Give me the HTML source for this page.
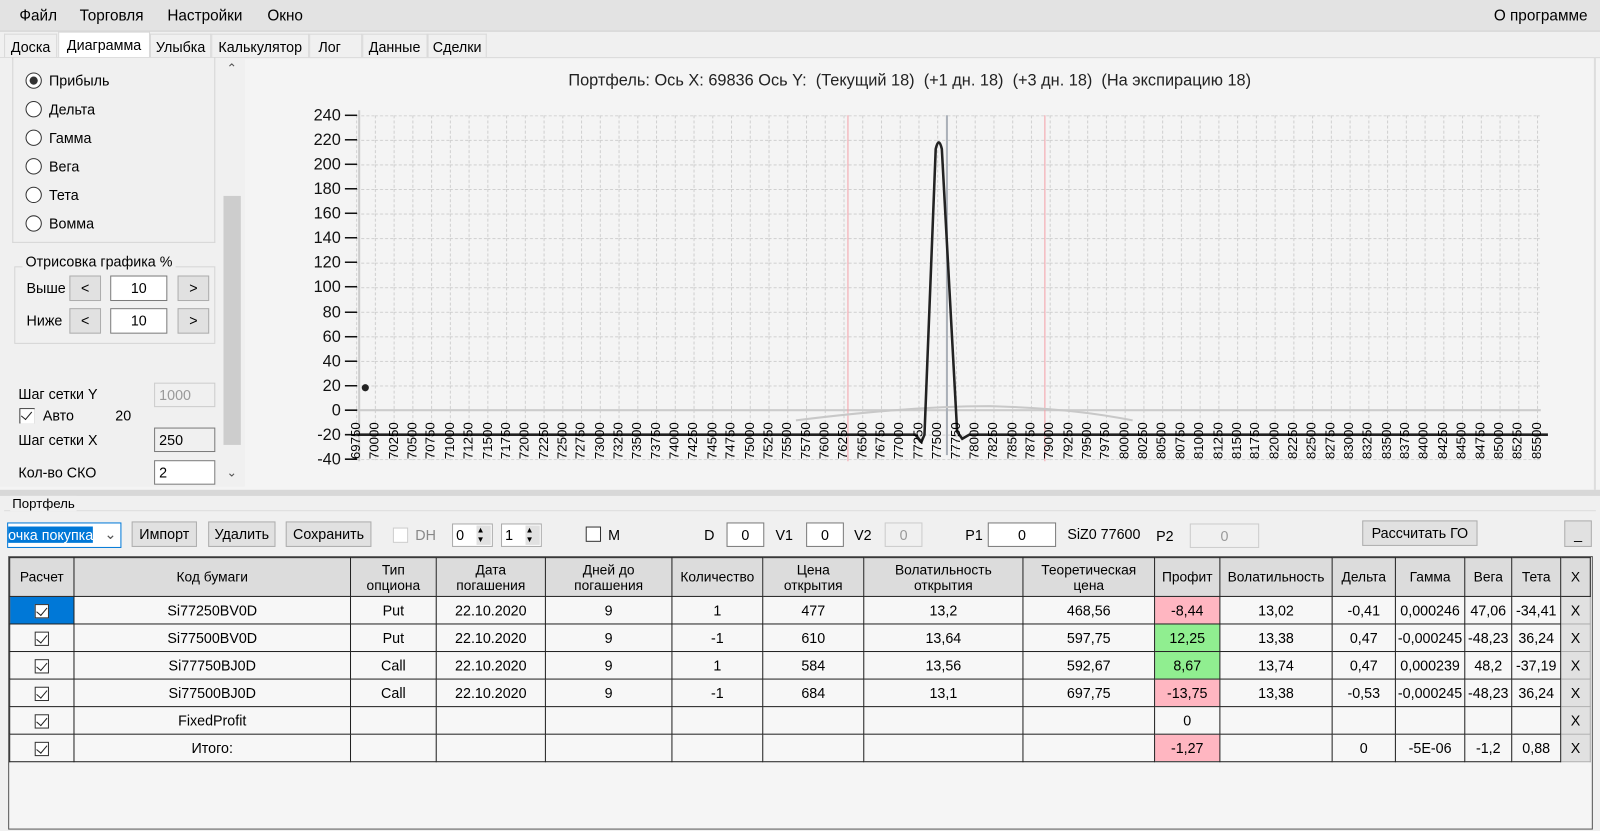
<!DOCTYPE html>
<html><head><meta charset="utf-8"><style>
*{box-sizing:border-box;margin:0;padding:0}
body{width:1600px;height:830px;background:#f0f0f0;font-family:"Liberation Sans",sans-serif;font-size:14px;color:#000;overflow:hidden}
#w{position:relative;width:1568px;height:814px;transform:scale(1.0204);transform-origin:0 0}
.a{position:absolute}
.menu{left:0;top:0;width:1568px;height:31px;background:#e3e3e3;border-bottom:1px solid #d0d0d0}
.menu span{position:absolute;top:7px;font-size:15px}
.tab{position:absolute;top:33px;height:23px;border:1px solid #d9d9d9;border-bottom:none;font-size:14px;padding:4px 0 0 0;text-align:center;background:#f0f0f0}
.btn{position:absolute;background:#e1e1e1;border:1px solid #adadad;text-align:center;font-size:14px}
.box{position:absolute;background:#fff;border:1px solid #7a7a7a;text-align:center;font-size:14px}
.dis{background:#f0f0f0;border-color:#ccc;color:#999}
.radio{position:absolute;left:25px;width:16px;height:16px;border:1px solid #333;border-radius:50%;background:#fff}
.rl{position:absolute;left:48px;font-size:14px}
.cb{position:absolute;width:15px;height:15px;border:1px solid #333;background:#fff}
.xl{position:absolute;left:340px;top:406px;display:flex}
.xl span{width:18.37px;writing-mode:vertical-rl;transform:rotate(180deg);font-size:13px;line-height:18px;height:44px;text-align:left}
table{border-collapse:collapse;position:absolute;left:9px;top:546px;table-layout:fixed;font-size:14px}
td,th{border:1px solid #222;text-align:center;height:27px;font-weight:normal;padding:0;white-space:nowrap;overflow:hidden}
th{background:#dcdcdc;height:38px;font-size:13.5px;line-height:15px}
td{background:#f7f7f7}
.r{background:#ffb6c1}.g{background:#90ee90}
.xb{background:#e1e1e1;border:1px solid #adadad}
.ck{display:inline-block;width:14px;height:14px;border:1px solid #333;background:#fff;position:relative;vertical-align:middle}
.ck:after{content:"";position:absolute;left:3px;top:0px;width:5px;height:9px;border-right:1.5px solid #222;border-bottom:1.5px solid #222;transform:rotate(40deg)}
</style></head><body><div id="w">
<div class="a menu"><span style="left:19px">Файл</span><span style="left:78px">Торговля</span><span style="left:164px">Настройки</span><span style="left:262px">Окно</span><span style="left:1464px">О программе</span></div>
<div class="tab" style="left:4px;width:52px">Доска</div>
<div class="tab" style="left:57px;width:90px;background:#fff;top:31px;height:25px">Диаграмма</div>
<div class="tab" style="left:147px;width:60px">Улыбка</div>
<div class="tab" style="left:207px;width:96px">Калькулятор</div>
<div class="tab" style="left:303px;width:52px;text-align:left;padding-left:8px">Лог</div>
<div class="tab" style="left:355px;width:64px;text-align:right;padding-right:6px">Данные</div>
<div class="tab" style="left:419px;width:58px">Сделки</div>
<div class="a" style="left:0;top:56px;width:1568px;height:424px;background:#f4f4f4;border-top:1px solid #d9d9d9"></div>
<div class="a" style="left:0;top:57px;width:240px;height:420px;background:#f0f0f0"></div>
<div class="a" style="left:12px;top:56px;width:199px;height:182px;border:1px solid #d5d5d5;border-top:none"></div>
<div class="radio" style="top:71px"><div style="position:absolute;left:3px;top:3px;width:8px;height:8px;border-radius:50%;background:#333"></div></div><div class="rl" style="top:71px">Прибыль</div>
<div class="radio" style="top:99px"></div><div class="rl" style="top:99px">Дельта</div>
<div class="radio" style="top:127px"></div><div class="rl" style="top:127px">Гамма</div>
<div class="radio" style="top:155px"></div><div class="rl" style="top:155px">Вега</div>
<div class="radio" style="top:183px"></div><div class="rl" style="top:183px">Тета</div>
<div class="radio" style="top:211px"></div><div class="rl" style="top:211px">Вомма</div>
<div class="a" style="left:14px;top:261px;width:197px;height:76px;border:1px solid #d5d5d5"></div>
<div class="a" style="left:22px;top:248px;background:#f0f0f0;padding:0 3px;font-size:14px">Отрисовка графика %</div>
<div class="a" style="left:26px;top:274px">Выше</div><div class="btn" style="left:68px;top:270px;width:31px;height:25px;padding-top:3px">&lt;</div><div class="box" style="left:108px;top:270px;width:56px;height:25px;padding-top:3px">10</div><div class="btn" style="left:174px;top:270px;width:31px;height:25px;padding-top:3px">&gt;</div>
<div class="a" style="left:26px;top:306px">Ниже</div><div class="btn" style="left:68px;top:302px;width:31px;height:25px;padding-top:3px">&lt;</div><div class="box" style="left:108px;top:302px;width:56px;height:25px;padding-top:3px">10</div><div class="btn" style="left:174px;top:302px;width:31px;height:25px;padding-top:3px">&gt;</div>
<div class="a" style="left:18px;top:378px">Шаг сетки Y</div><div class="box dis" style="left:151px;top:375px;width:60px;height:24px;text-align:left;padding:3px 4px">1000</div>
<div class="cb" style="left:19px;top:400px"><span class="ck" style="border:none;position:absolute;left:0;top:0"></span></div><div class="a" style="left:42px;top:399px">Авто</div><div class="a" style="left:113px;top:399px">20</div>
<div class="a" style="left:18px;top:423px">Шаг сетки X</div><div class="box" style="left:151px;top:419px;width:60px;height:24px;text-align:left;padding:3px 4px;background:#f0f0f0">250</div>
<div class="a" style="left:18px;top:455px">Кол-во СКО</div><div class="box" style="left:151px;top:451px;width:60px;height:24px;text-align:left;padding:3px 4px">2</div>
<div class="a" style="left:218px;top:58px;width:18px;height:418px;background:#f0f0f0"></div>
<div class="a" style="left:219px;top:192px;width:17px;height:244px;background:#cdcdcd"></div>
<div class="a" style="left:222px;top:60px;font-size:12px;color:#555">&#8963;</div>
<div class="a" style="left:222px;top:456px;font-size:12px;color:#555">&#8964;</div>
<div class="a" style="left:557px;top:71px;font-size:16px;color:#222">Портфель: Ось X: 69836 Ось Y: &nbsp;(Текущий 18) &nbsp;(+1 дн. 18) &nbsp;(+3 дн. 18) &nbsp;(На экспирацию 18)</div>
<svg class="a" style="left:0;top:0" width="1568" height="480">
<defs><pattern id="gv" x="349" y="113" width="18.37" height="24.07" patternUnits="userSpaceOnUse"><line x1="0.5" y1="0" x2="0.5" y2="24.07" stroke="#cfcfcf" stroke-dasharray="3,2"/><line x1="0" y1="0.5" x2="18.37" y2="0.5" stroke="#cfcfcf" stroke-dasharray="3,2"/></pattern></defs>
<rect x="349" y="113" width="1160" height="338" fill="url(#gv)"/>
<line x1="352" y1="108" x2="352" y2="452" stroke="#ccc" stroke-width="2"/>
<line x1="349" y1="402" x2="1510" y2="402" stroke="#ccc" stroke-width="2"/>
<line x1="831" y1="113" x2="831" y2="452" stroke="#f4a0a8"/>
<line x1="1024" y1="113" x2="1024" y2="452" stroke="#f4a0a8"/>
<line x1="928" y1="113" x2="928" y2="446" stroke="#aab0b8" stroke-width="2"/>
<g font-size="16" text-anchor="end" fill="#111">
<text x="334" y="118">240</text><text x="334" y="142">220</text><text x="334" y="166">200</text><text x="334" y="190">180</text><text x="334" y="214">160</text><text x="334" y="238">140</text><text x="334" y="262">120</text><text x="334" y="286">100</text><text x="334" y="311">80</text><text x="334" y="335">60</text><text x="334" y="359">40</text><text x="334" y="383">20</text><text x="334" y="407">0</text><text x="334" y="431">-20</text><text x="334" y="455">-40</text>
</g>
<g stroke="#111" stroke-width="1.5">
<line x1="338" y1="113" x2="350" y2="113"/><line x1="338" y1="137" x2="350" y2="137"/><line x1="338" y1="161" x2="350" y2="161"/><line x1="338" y1="185" x2="350" y2="185"/><line x1="338" y1="209" x2="350" y2="209"/><line x1="338" y1="233" x2="350" y2="233"/><line x1="338" y1="257" x2="350" y2="257"/><line x1="338" y1="281" x2="350" y2="281"/><line x1="338" y1="306" x2="350" y2="306"/><line x1="338" y1="330" x2="350" y2="330"/><line x1="338" y1="354" x2="350" y2="354"/><line x1="338" y1="378" x2="350" y2="378"/><line x1="338" y1="402" x2="350" y2="402"/><line x1="338" y1="426" x2="350" y2="426"/><line x1="338" y1="450" x2="350" y2="450"/>
</g>
<path d="M780 412 C 860 402, 920 398, 970 398 C 1040 400, 1080 406, 1110 412" fill="none" stroke="#c8c8c8" stroke-width="2"/>
<path d="M349 426 L897 426 L903 433 L906 426 L917 146 Q920 133 923 146 L938 423 L943 430 L950 426 L1517 426" fill="none" stroke="#222" stroke-width="2.5"/>
<circle cx="358" cy="380" r="3.5" fill="#222"/>
</svg>
<div class="xl"><span>69750</span><span>70000</span><span>70250</span><span>70500</span><span>70750</span><span>71000</span><span>71250</span><span>71500</span><span>71750</span><span>72000</span><span>72250</span><span>72500</span><span>72750</span><span>73000</span><span>73250</span><span>73500</span><span>73750</span><span>74000</span><span>74250</span><span>74500</span><span>74750</span><span>75000</span><span>75250</span><span>75500</span><span>75750</span><span>76000</span><span>76250</span><span>76500</span><span>76750</span><span>77000</span><span>77250</span><span>77500</span><span>77750</span><span>78000</span><span>78250</span><span>78500</span><span>78750</span><span>79000</span><span>79250</span><span>79500</span><span>79750</span><span>80000</span><span>80250</span><span>80500</span><span>80750</span><span>81000</span><span>81250</span><span>81500</span><span>81750</span><span>82000</span><span>82250</span><span>82500</span><span>82750</span><span>83000</span><span>83250</span><span>83500</span><span>83750</span><span>84000</span><span>84250</span><span>84500</span><span>84750</span><span>85000</span><span>85250</span><span>85500</span></div>
<div class="a" style="left:1562px;top:56px;width:2px;height:424px;background:#ddd"></div>
<div class="a" style="left:0;top:480px;width:1568px;height:6px;background:#d8d8d8"></div>
<div class="a" style="left:4px;top:500px;width:1560px;height:1px;background:#ddd"></div>
<div class="a" style="left:10px;top:486px;font-size:13px;background:#f0f0f0;padding:0 2px">Портфель</div>
<div class="box" style="left:7px;top:512px;width:112px;height:25px;border:1px solid #0078d7;text-align:left;padding-top:3px"><span style="background:#0078d7;color:#fff">очка покупка</span><span style="position:absolute;right:4px;top:2px;color:#555">&#8964;</span></div>
<div class="btn" style="left:129px;top:511px;width:64px;height:25px;padding-top:3px">Импорт</div>
<div class="btn" style="left:204px;top:511px;width:66px;height:25px;padding-top:3px">Удалить</div>
<div class="btn" style="left:280px;top:511px;width:84px;height:25px;padding-top:3px">Сохранить</div>
<div class="cb" style="left:385px;top:517px;border-color:#ccc"></div><div class="a" style="left:407px;top:516px;color:#888">DH</div>
<div class="box" style="left:443px;top:513px;width:40px;height:23px;text-align:left;padding:2px 3px;border-color:#aaa">0<span style="position:absolute;right:1px;top:1px;width:14px;height:19px;background:#e1e1e1;font-size:8px;line-height:9px">▲<br>▼</span></div>
<div class="box" style="left:491px;top:513px;width:40px;height:23px;text-align:left;padding:2px 3px;border-color:#aaa">1<span style="position:absolute;right:1px;top:1px;width:14px;height:19px;background:#e1e1e1;font-size:8px;line-height:9px">▲<br>▼</span></div>
<div class="cb" style="left:574px;top:516px"></div><div class="a" style="left:596px;top:516px">M</div>
<div class="a" style="left:690px;top:516px">D</div><div class="box" style="left:712px;top:512px;width:37px;height:24px;padding-top:3px">0</div>
<div class="a" style="left:760px;top:516px">V1</div><div class="box" style="left:790px;top:512px;width:37px;height:24px;padding-top:3px">0</div>
<div class="a" style="left:837px;top:516px">V2</div><div class="box dis" style="left:867px;top:512px;width:37px;height:24px;padding-top:3px">0</div>
<div class="a" style="left:946px;top:516px">P1</div><div class="box" style="left:968px;top:512px;width:67px;height:24px;padding-top:3px">0</div>
<div class="a" style="left:1046px;top:515px">SiZ0 77600</div>
<div class="a" style="left:1133px;top:517px">P2</div><div class="box dis" style="left:1166px;top:513px;width:68px;height:24px;padding-top:3px">0</div>
<div class="btn" style="left:1335px;top:510px;width:113px;height:25px;padding-top:3px">Рассчитать ГО</div>
<div class="btn" style="left:1533px;top:510px;width:27px;height:26px;padding-top:4px">_</div>
<div class="a" style="left:8px;top:545px;width:1553px;height:268px;border:1px solid #555;background:#f5f5f5"></div>
<table>
<colgroup><col style="width:63px"><col style="width:271px"><col style="width:84px"><col style="width:107px"><col style="width:124px"><col style="width:89px"><col style="width:99px"><col style="width:156px"><col style="width:129px"><col style="width:64px"><col style="width:110px"><col style="width:62px"><col style="width:68px"><col style="width:46px"><col style="width:48px"><col style="width:29px"></colgroup>
<tr><th>Расчет</th><th>Код бумаги</th><th>Тип<br>опциона</th><th>Дата<br>погашения</th><th>Дней до<br>погашения</th><th>Количество</th><th>Цена<br>открытия</th><th>Волатильность<br>открытия</th><th>Теоретическая<br>цена</th><th>Профит</th><th>Волатильность</th><th>Дельта</th><th>Гамма</th><th>Вега</th><th>Тета</th><th>X</th></tr>
<tr><td style="background:#0078d7"><span class="ck"></span></td><td>Si77250BV0D</td><td>Put</td><td>22.10.2020</td><td>9</td><td>1</td><td>477</td><td>13,2</td><td>468,56</td><td class="r">-8,44</td><td>13,02</td><td>-0,41</td><td>0,000246</td><td>47,06</td><td>-34,41</td><td class="xb">X</td></tr>
<tr><td><span class="ck"></span></td><td>Si77500BV0D</td><td>Put</td><td>22.10.2020</td><td>9</td><td>-1</td><td>610</td><td>13,64</td><td>597,75</td><td class="g">12,25</td><td>13,38</td><td>0,47</td><td>-0,000245</td><td>-48,23</td><td>36,24</td><td class="xb">X</td></tr>
<tr><td><span class="ck"></span></td><td>Si77750BJ0D</td><td>Call</td><td>22.10.2020</td><td>9</td><td>1</td><td>584</td><td>13,56</td><td>592,67</td><td class="g">8,67</td><td>13,74</td><td>0,47</td><td>0,000239</td><td>48,2</td><td>-37,19</td><td class="xb">X</td></tr>
<tr><td><span class="ck"></span></td><td>Si77500BJ0D</td><td>Call</td><td>22.10.2020</td><td>9</td><td>-1</td><td>684</td><td>13,1</td><td>697,75</td><td class="r">-13,75</td><td>13,38</td><td>-0,53</td><td>-0,000245</td><td>-48,23</td><td>36,24</td><td class="xb">X</td></tr>
<tr><td><span class="ck"></span></td><td>FixedProfit</td><td></td><td></td><td></td><td></td><td></td><td></td><td></td><td>0</td><td></td><td></td><td></td><td></td><td></td><td class="xb">X</td></tr>
<tr><td><span class="ck"></span></td><td>Итого:</td><td></td><td></td><td></td><td></td><td></td><td></td><td></td><td class="r">-1,27</td><td></td><td>0</td><td>-5E-06</td><td>-1,2</td><td>0,88</td><td class="xb">X</td></tr>
</table>
</div></body></html>
